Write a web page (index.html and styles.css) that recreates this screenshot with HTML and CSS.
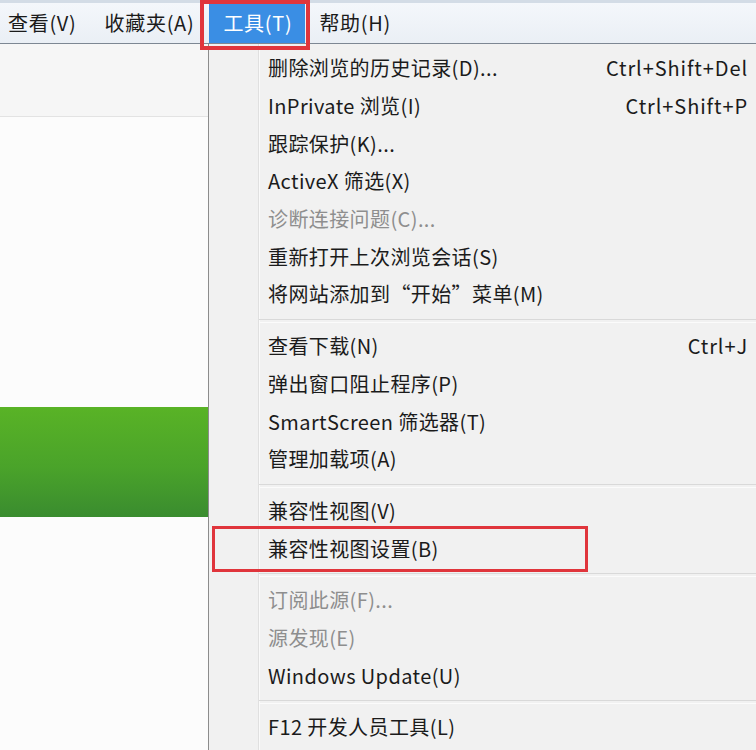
FILE: index.html
```html
<!DOCTYPE html>
<html lang="zh-CN">
<head>
<meta charset="utf-8">
<title>工具菜单</title>
<link rel="stylesheet" href="styles.css">
</head>
<body>
<div class="screen">
  <div class="menubar">
    <div class="mb-item first">查看(V)</div>
    <div class="mb-item second">收藏夹(A)</div>
    <div class="mb-item active">工具(T)</div>
    <div class="mb-item">帮助(H)</div>
  </div>
  <div class="page">
    <div class="page-top"></div>
    <div class="page-gap"></div>
    <div class="page-green"></div>
    <div class="page-rest"></div>
  </div>

  <div class="dropdown">
    <div class="gutter"></div>
    <div class="mi"><span class="label">删除浏览的历史记录(D)...</span><span class="key">Ctrl+Shift+Del</span></div>
    <div class="mi"><span class="label">InPrivate 浏览(I)</span><span class="key">Ctrl+Shift+P</span></div>
    <div class="mi"><span class="label">跟踪保护(K)...</span></div>
    <div class="mi"><span class="label">ActiveX 筛选(X)</span></div>
    <div class="mi disabled"><span class="label">诊断连接问题(C)...</span></div>
    <div class="mi"><span class="label">重新打开上次浏览会话(S)</span></div>
    <div class="mi"><span class="label">将网站添加到“开始”菜单(M)</span></div>
    <div class="sep"></div>
    <div class="mi"><span class="label">查看下载(N)</span><span class="key">Ctrl+J</span></div>
    <div class="mi"><span class="label">弹出窗口阻止程序(P)</span></div>
    <div class="mi"><span class="label">SmartScreen 筛选器(T)</span></div>
    <div class="mi"><span class="label">管理加载项(A)</span></div>
    <div class="sep"></div>
    <div class="mi"><span class="label">兼容性视图(V)</span></div>
    <div class="mi"><span class="label">兼容性视图设置(B)</span></div>
    <div class="sep"></div>
    <div class="mi disabled"><span class="label">订阅此源(F)...</span></div>
    <div class="mi disabled"><span class="label">源发现(E)</span></div>
    <div class="mi"><span class="label">Windows Update(U)</span></div>
    <div class="sep"></div>
    <div class="mi"><span class="label">F12 开发人员工具(L)</span></div>
  </div>

  <div class="mark mark-tools"></div>
  <div class="mark mark-compat"></div>
</div>
</body>
</html>
```

FILE: styles.css
```css
* { box-sizing: border-box; }
html, body { margin: 0; padding: 0; }
body {
  background: #ffffff;
  font-family: "Noto Sans CJK SC", "Noto Sans", sans-serif;
  color: #1b1b1b;
}
.screen {
  position: relative;
  width: 756px;
  height: 750px;
  overflow: hidden;
  background: #fcfcfc;
}
.menubar {
  display: flex;
  height: 44px;
  border-top: 3px solid #d3dce6;
  border-bottom: 1px solid #7d8793;
  background: linear-gradient(#f4f7fb, #eaeff5);
  font-size: 20px;
  line-height: 40px;
  letter-spacing: 0.7px;
}
.mb-item {
  padding: 0 14px;
  white-space: nowrap;
  color: #1b1b1b;
}
.mb-item.first { padding-left: 8px; }
.mb-item.second { padding-right: 15px; }
.mb-item.active {
  background: #3a8ee4;
  color: #ffffff;
  padding-right: 13px;
}
.page {
  width: 208px;
  display: flex;
  flex-direction: column;
}
.page-top {
  height: 73px;
  background: #f6f6f6;
  border-bottom: 1px solid #e3e3e3;
}
.page-gap { height: 290px; background: #fcfcfc; }
.page-green {
  height: 110px;
  background: linear-gradient(#59b326, #4aa32a 55%, #3a8c2f);
}
.page-rest { flex: 1; background: #fcfcfc; height: 240px; }

.dropdown {
  position: absolute;
  left: 208px;
  top: 44px;
  width: 560px;
  height: 720px;
  background: #f1f1f1;
  border-left: 1px solid #8c8c8c;
  padding-top: 5px;
  font-size: 20px;
}
.gutter {
  position: absolute;
  left: 49px;
  top: 0;
  bottom: 0;
  width: 2px;
  border-left: 1px solid #e0e0e0;
  border-right: 1px solid #fafafa;
}
.mi {
  position: relative;
  display: flex;
  justify-content: space-between;
  align-items: center;
  height: 37.7px;
  padding-left: 59px;
  padding-right: 20px;
  white-space: nowrap;
  color: #1b1b1b;
  letter-spacing: 0.4px;
}
.mi.disabled { color: #8e8e8e; }
.key { color: #1b1b1b; letter-spacing: 0.9px; }
.sep {
  position: relative;
  height: 14px;
  margin-left: 50px;
}
.sep::after {
  content: "";
  position: absolute;
  left: 0;
  right: 0;
  top: 6px;
  height: 2px;
  border-top: 1px solid #d9d9d9;
  border-bottom: 1px solid #fbfbfb;
}
.mark {
  position: absolute;
  border: 4px solid #e0353c;
}
.mark-tools {
  left: 200px;
  top: 0;
  width: 110px;
  height: 50px;
}
.mark-compat {
  left: 212px;
  top: 526px;
  width: 376px;
  height: 46px;
  border-width: 3px;
}
```
